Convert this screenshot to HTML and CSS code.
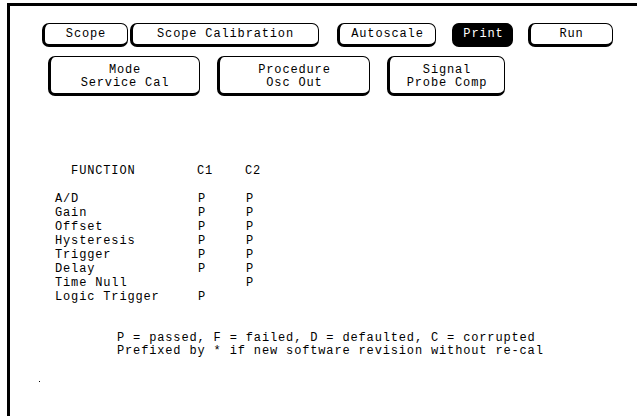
FILE: index.html
```html
<!DOCTYPE html>
<html lang="en">
<head>
  <meta charset="UTF-8">
  <title>Scope Calibration</title>
  <link rel="stylesheet" href="styles.css">
</head>
<body>
  <div class="screen">
    <div class="menu-row top-row">
      <div class="btn btn-scope">Scope</div>
      <div class="btn btn-cal">Scope Calibration</div>
      <div class="btn btn-auto">Autoscale</div>
      <div class="btn btn-print">Print</div>
      <div class="btn btn-run">Run</div>
    </div>

    <div class="menu-row field-row">
      <div class="btn field btn-mode">Mode<br>Service Cal</div>
      <div class="btn field btn-proc">Procedure<br>Osc Out</div>
      <div class="btn field btn-signal">Signal<br>Probe Comp</div>
    </div>

    <div class="results">
      <div class="row head">
        <span class="name">  FUNCTION</span><span>C1</span><span>C2</span>
      </div>
      <div class="row spacer"></div>
      <div class="row"><span class="name">A/D</span><span>P</span><span>P</span></div>
      <div class="row"><span class="name">Gain</span><span>P</span><span>P</span></div>
      <div class="row"><span class="name">Offset</span><span>P</span><span>P</span></div>
      <div class="row"><span class="name">Hysteresis</span><span>P</span><span>P</span></div>
      <div class="row"><span class="name">Trigger</span><span>P</span><span>P</span></div>
      <div class="row"><span class="name">Delay</span><span>P</span><span>P</span></div>
      <div class="row"><span class="name">Time Null</span><span></span><span>P</span></div>
      <div class="row"><span class="name">Logic Trigger</span><span>P</span><span></span></div>
    </div>

    <div class="legend">
      <div>P = passed, F = failed, D = defaulted, C = corrupted</div>
      <div>Prefixed by * if new software revision without re-cal</div>
    </div>

    <div class="dot"></div>
  </div>
</body>
</html>
```

FILE: styles.css
```css
body {
  margin: 0;
  padding: 0;
  background-color: #fff;
  color: #000;
  font-family: "Liberation Mono", "DejaVu Sans Mono", monospace;
  font-size: 12px;
  letter-spacing: 0.85px;
}

.screen {
  margin: 3px 0 0 7px;
  height: 413px;
  border-top: 3px solid #000;
  border-left: 3px solid #000;
  box-sizing: border-box;
  overflow: hidden;
}

.menu-row {
  display: flex;
}

.top-row {
  margin-top: 17px;
  padding-left: 32px;
  height: 24px;
}

.field-row {
  margin-top: 9px;
  padding-left: 38px;
  height: 40px;
}

.btn {
  box-sizing: border-box;
  height: 100%;
  padding-top: 1px;
  border: 1px solid #000;
  border-left-width: 3px;
  border-bottom-width: 3px;
  border-radius: 7px;
  display: flex;
  align-items: center;
  justify-content: center;
  text-align: center;
  line-height: 13px;
  white-space: nowrap;
}

.field {
  padding-top: 3px;
}

.btn-scope { width: 86px; }
.btn-cal { width: 189px; margin-left: 2px; }
.btn-auto { width: 99px; margin-left: 18px; }
.btn-print {
  width: 61px;
  margin-left: 16px;
  background-color: #000;
  color: #fff;
}
.btn-run { width: 85px; margin-left: 15px; }

.btn-mode { width: 152px; }
.btn-proc { width: 153px; margin-left: 17px; }
.btn-signal { width: 118px; margin-left: 17px; }

.results {
  margin-top: 68px;
  padding-left: 45px;
}

.row {
  display: grid;
  grid-template-columns: 142px 48px 40px;
  height: 14px;
  line-height: 14px;
  white-space: pre;
}

.row span {
  padding-left: 1px;
}

.row .name {
  padding-left: 0;
}

.head span {
  padding-left: 0;
}

.legend {
  margin-top: 28px;
  padding-left: 107px;
  line-height: 13px;
}

.dot {
  width: 1px;
  height: 1px;
  background-color: #000;
  margin: 23px 0 0 29px;
}
```
